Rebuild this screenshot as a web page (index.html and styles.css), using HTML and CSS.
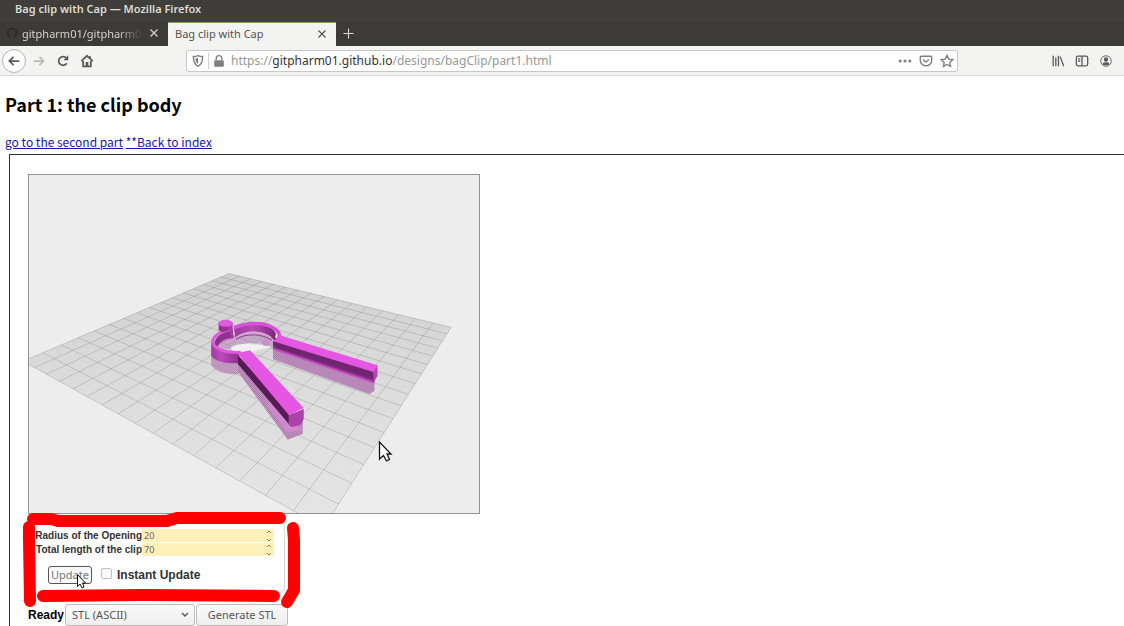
FILE: index.html
```html
<!DOCTYPE html>
<html lang="en">
<head>
<meta charset="utf-8">
<title>Bag clip with Cap</title>
<link rel="stylesheet" href="styles.css">
</head>
<body>
<div class="window">
  <header class="chrome">
    <div class="titlebar">Bag clip with Cap — Mozilla Firefox</div>
    <div class="tabs">
      <div class="tab">
        <svg class="favicon" viewBox="0 0 16 16"><path fill="#2b2c28" d="M8 1a7 7 0 0 0-2.200 13.600c.4.100.5-.1.5-.3v-1.300c-2 .4-2.400-.9-2.400-.9-.3-.8-.8-1-.8-1-.6-.5.100-.5.100-.5.700.100 1.100.8 1.100.8.6 1.100 1.700.8 2.100.6.100-.5.300-.8.500-1-1.600-.2-3.200-.8-3.200-3.500 0-.8.300-1.400.7-1.900 0-.2-.3-.9.100-1.900 0 0 .6-.2 2 .7a7 7 0 0 1 3.500 0c1.300-.9 1.900-.7 1.900-.7.4 1 .2 1.700.1 1.900.5.500.7 1.100.7 1.900 0 2.700-1.600 3.300-3.200 3.500.3.200.5.700.5 1.300v2c0 .2.100.4.500.3A7 7 0 0 0 8 1z"/></svg>
        <span class="tab-name tab-name-faded">gitpharm01/gitpharm0</span>
        <button class="tab-close" aria-label="Close tab"><svg viewBox="0 0 8 8"><path d="M.5.5l7 7M7.500.5l-7 7"/></svg></button>
      </div>
      <div class="tab tab-active">
        <span class="tab-name">Bag clip with Cap</span>
        <button class="tab-close" aria-label="Close tab"><svg viewBox="0 0 8 8"><path d="M.5.5l7 7M7.500.5l-7 7"/></svg></button>
      </div>
      <button class="tab-new" aria-label="New tab"><svg viewBox="0 0 12 12"><path d="M6 .5v11M.5 6h11"/></svg></button>
    </div>
    <nav class="toolbar">
      <div class="nav-buttons">
        <button class="tool back" aria-label="Back"><svg viewBox="0 0 16 16"><path d="M14 8H3M7.500 3.200L2.700 8l4.800 4.800"/></svg></button>
        <button class="tool forward" aria-label="Forward"><svg viewBox="0 0 16 16"><path d="M2 8h11M8.500 3.200L13.300 8l-4.800 4.800"/></svg></button>
        <button class="tool" aria-label="Reload"><svg viewBox="0 0 16 16"><path d="M12.400 10.500a5 5 0 1 1-.6-6"/><path class="solid" d="M14 1.500v5.500H8.500z"/></svg></button>
        <button class="tool" aria-label="Home"><svg viewBox="0 0 16 16"><path d="M1.500 8.200L8 2l6.500 6.200M3.600 8v6h8.800V8"/><path class="solid" d="M6.500 9h3v5h-3zM10.500 2.500h2v3h-2z"/></svg></button>
      </div>
      <div class="urlbar">
        <svg class="glyph" viewBox="0 0 16 16"><path d="M8 1.800c2 .9 3.800 1.100 5.300 1.100 0 6-1.300 9.300-5.300 11.300-4-2-5.300-5.300-5.300-11.300C4.200 2.900 6 2.700 8 1.800z"/><path class="solid" d="M8 4.300v7.200C6 10.300 5.100 8.500 5 5c1.100 0 2-.2 3-.7z"/></svg>
        <span class="divider"></span>
        <svg class="glyph" viewBox="0 0 16 16"><path d="M4.800 7V5a3.200 3.200 0 0 1 6.400 0v2"/><rect class="solid" x="2.500" y="7" width="11" height="7.500" rx="1.500"/></svg>
        <span class="url">https://<b>gitpharm01.github.io</b>/designs/bagClip/part1.html</span>
        <svg class="glyph" viewBox="0 0 16 16"><g class="solid"><circle cx="2.500" cy="8" r="1.800"/><circle cx="8" cy="8" r="1.800"/><circle cx="13.500" cy="8" r="1.800"/></g></svg>
        <svg class="glyph" viewBox="0 0 16 16"><path d="M2.500 2.500h11a1 1 0 0 1 1 1V7a6.500 6.500 0 0 1-13 0V3.500a1 1 0 0 1 1-1zM4.800 6.300L8 9.300l3.200-3"/></svg>
        <svg class="glyph" viewBox="0 0 16 16"><path d="M8 1.600l2 4.200 4.600.6-3.400 3.200.9 4.600L8 12l-4.100 2.200.9-4.600L1.400 6.400 6 5.800z"/></svg>
      </div>
      <div class="side-buttons">
        <button class="tool" aria-label="Library"><svg viewBox="0 0 16 16"><path d="M2.500 2v12M5.500 4v10M8.500 2v12M10.500 3l4 11"/></svg></button>
        <button class="tool" aria-label="Sidebar"><svg viewBox="0 0 16 16"><rect x="1.500" y="2.500" width="13" height="11" rx="2"/><path d="M8 2.500v11M3.500 5.500h2.500M3.500 8h2.500"/></svg></button>
        <button class="tool" aria-label="Account"><svg viewBox="0 0 16 16"><circle cx="8" cy="8" r="6" stroke-width="1"/><circle class="solid" cx="8" cy="6.300" r="2.500"/><path class="solid" d="M4 11c1.500-2 6.500-2 8 0C11 13.500 5 13.500 4 11z"/></svg></button>
      </div>
    </nav>
  </header>

  <main class="page">
    <h1>Part 1: the clip body</h1>
    <p class="links"><a href="#part2">go to the second part</a> <a href="#index">**Back to index</a></p>
    <section class="frame">
      <svg class="viewer" viewBox="28 174 452 339" role="img" aria-label="3D preview of the clip body">
        <defs>
          <linearGradient id="plate" x1="0" y1="0" x2="0" y2="1"><stop offset="0" stop-color="#dadada"/><stop offset=".5" stop-color="#e1e1e1"/><stop offset="1" stop-color="#e8e8e8"/></linearGradient>
          <linearGradient id="wall" x1="0" x2="1"><stop offset="0" stop-color="#a23aa0"/><stop offset=".35" stop-color="#bd48bb"/><stop offset="1" stop-color="#8b318a"/></linearGradient>
          <linearGradient id="inner" x1="0" x2="1"><stop offset="0" stop-color="#9a3999"/><stop offset=".45" stop-color="#b84ab7"/><stop offset="1" stop-color="#772876"/></linearGradient>
          <linearGradient id="side" x1="0" x2="1"><stop offset="0" stop-color="#722770"/><stop offset="1" stop-color="#7f2d7d"/></linearGradient>
          <pattern id="mesh" width="2" height="2" patternUnits="userSpaceOnUse"><rect width="2" height="2" fill="#c99ac8"/><path fill="#a775a6" d="M0 0h1v1H0zM1 1h1v1H1z"/></pattern>
        </defs>
        <path fill="url(#plate)" d="M229 273L452 327 324 528 22 361z"/>
        <path id="minor" class="grid-minor"/>
        <path id="major" class="grid-major"/>

        <g fill="url(#mesh)">
          <path opacity=".8" d="M211 352v12c2 6 12 10 25 10l4-1v-14z"/>
          <path opacity=".6" d="M217 346c4-7 12-9 18-9 9-7 30-7 38 2v8c-14-6-28-5-36-1l-8 3-9-1z"/>
          <path d="M273 345v14l97 35 5-3v-14z"/>
          <path d="M238 358v14l50 68 15-6v-14l-18-4z"/>
        </g>
        <path fill="#d68bd5" opacity=".7" d="M270 400l32 30-14 3-20-26z"/>
        <path fill="#f1eff1" d="M231 347c7-4 14-4 23-3 6 0 12 2 18 3l-11 2-10 3-12-1c-4 0-8 0-8-4z"/>
        <ellipse cx="266" cy="342" rx="4" ry="3.500" fill="#c98fc9"/>

        <path fill="url(#inner)" d="M234 328c12-7 38-7 42 6l-2 6c-5-9-26-13-39-3z"/>
        <path fill="none" stroke="#e2a0e1" d="M236 337c9-6 26-6 35 0"/>
        <path fill="none" stroke="#93378f" d="M236 339c9-6 26-6 36 1"/>
        <path fill="#8c348b" d="M214 343c2-8 10-12 19-13v8c-8 0-13 3-16 9z"/>
        <path fill="none" stroke="#cf60cd" d="M218 346c3-5 8-7 15-8"/>
        <path fill="url(#wall)" d="M211 342v13c2 5 13 9 28 8V352c-14 0-25-4-28-10z"/>
        <path fill="none" stroke="#df58dd" stroke-width="3" d="M233 329c-12 1-21 7-20.500 13 1 7 14 11 28 10"/>
        <path fill="none" stroke="#d851d6" stroke-width="3.500" d="M234 327.500c12-6 31-6 40 .5 6 4 7 7 4 11"/>
        <path fill="#93338f" d="M218.500 323v7l4 2 6-2v-6z"/>
        <path fill="#a93da8" d="M227 325l5.500-2v10l2 4-3 1-3-9z"/>
        <ellipse cx="225.500" cy="323" rx="7.500" ry="3.500" fill="#df59dd"/>

        <path fill="#a43da3" d="M273 345l102 34v4l-102-34z"/>
        <path fill="url(#side)" d="M274 337l101 32v12l-101-34z"/>
        <path fill="#cc50ca" d="M273 348l101 34v1.500l-101-34z"/>
        <path fill="#e557e3" d="M273 341l7-6 98 30-4 10z"/>
        <path fill="#702570" d="M273 341l101 31v7l-101-34z"/>
        <path fill="#b444b2" d="M374 372l4-7v11l-4 7z"/>
        <path fill="#571b56" d="M238 355l51 56v13l-51-60z"/>
        <path fill="#e557e3" d="M237 353l13-3 54 58-15 7z"/>
        <path fill="#ad42ab" d="M289 415l15-6v10l-3 6-9 2-3-2z"/>
      </svg>

      <form class="params">
        <div class="field">
          <label for="radius">Radius of the Opening</label>
          <span class="number"><input id="radius" type="number" value="20"><svg viewBox="0 0 6 12"><path d="M1 3l2-2 2 2M1 9l2 2 2-2"/></svg></span>
        </div>
        <div class="field">
          <label for="length">Total length of the clip</label>
          <span class="number"><input id="length" type="number" value="70"><svg viewBox="0 0 6 12"><path d="M1 3l2-2 2 2M1 9l2 2 2-2"/></svg></span>
        </div>
        <div class="actions">
          <button class="update" type="button">Update</button>
          <input class="check" id="instant" type="checkbox">
          <label for="instant">Instant Update</label>
        </div>
      </form>

      <div class="export">
        <label for="format">Ready</label>
        <span class="picker"><select id="format"><option>STL (ASCII)</option></select><svg viewBox="0 0 8 6"><path d="M1 1l3 3 3-3"/></svg></span>
        <button class="generate" type="button">Generate STL</button>
      </div>
    </section>
  </main>

  <svg class="markup" width="1124" height="626" viewBox="0 0 1124 626" aria-hidden="true">
    <g fill="none" stroke="#fe0000" stroke-width="12" stroke-linecap="round" stroke-linejoin="round">
      <path d="M33 519h18l7 2h109l10-3h103"/>
      <path d="M29 527v11l1 63"/>
      <path d="M43 596l100-1 131 1"/>
      <path d="M293 528l1 12v50l-7 12"/>
    </g>
    <g fill="#fff" stroke="#111" stroke-width="1">
      <path stroke-width="1.300" d="M379.500 442v17l4-3.500 3 5.500 3-1.500-2.500-5.500h4z"/>
      <path d="M77.500 574.500v12l2.500-2.500 2 4 2-1-1.500-4h3z"/>
    </g>
  </svg>
</div>
<script src="grid.js"></script>
</body>
</html>
```
FILE: grid.js
```js
// Projects the build plate's unit square onto its four screen corners.
const A = [229, 273], B = [452, 327], D = [324, 528], C = [22, 361];
const sx = A[0] - B[0] + D[0] - C[0], sy = A[1] - B[1] + D[1] - C[1];
const dx1 = B[0] - D[0], dx2 = C[0] - D[0], dy1 = B[1] - D[1], dy2 = C[1] - D[1];
const det = dx1 * dy2 - dx2 * dy1;
const g = (sx * dy2 - dx2 * sy) / det, h = (dx1 * sy - sx * dy1) / det;

function project(u, v) {
  const w = g * u + h * v + 1;
  const x = (B[0] - A[0] + g * B[0]) * u + (C[0] - A[0] + h * C[0]) * v + A[0];
  const y = (B[1] - A[1] + g * B[1]) * u + (C[1] - A[1] + h * C[1]) * v + A[1];
  return (x / w).toFixed(2) + " " + (y / w).toFixed(2);
}

function lines(count) {
  let d = "";
  for (let i = 0; i <= count; i++) {
    const t = i / count;
    d += `M${project(t, 0)}L${project(t, 1)}M${project(0, t)}L${project(1, t)}`;
  }
  return d;
}

document.getElementById("major").setAttribute("d", lines(16));
document.getElementById("minor").setAttribute("d", lines(160));
```
FILE: styles.css
```css
* { box-sizing: border-box; }
body { margin: 0; background: #fff; }
button { margin: 0; padding: 0; border: 0; background: none; }
svg { display: block; flex: none; }

.window { position: relative; height: 100vh; overflow: hidden; }
.chrome { font-family: "Noto Sans", sans-serif; font-size: 12px; }
.titlebar {
  height: 22px; padding-left: 15px; line-height: 17px;
  background: #3f3e3a; color: #dedbd3; font-size: 11px; font-weight: 600;
}
.tabs { display: flex; height: 24px; background: #3c3b37; }
.tab { display: flex; align-items: center; width: 168px; padding: 0 10px 2px 6px; color: #d5d2ca; }
.tab-active { padding-left: 7px; background: #f3f3f2; border-top: 1px solid #7da24a; color: #55544f; }
.favicon { width: 12px; height: 12px; margin-right: 4px; }
.tab-name { flex: 1; white-space: nowrap; font-size: 11px; }
.tab-name-faded { -webkit-mask-image: linear-gradient(90deg, #000 80%, transparent); mask-image: linear-gradient(90deg, #000 80%, transparent); }
.tab-close { width: 8px; height: 8px; margin-left: 8px; color: inherit; }
.tab-close svg, .tab-new svg { width: 100%; stroke: currentColor; stroke-width: 1.2; fill: none; }
.tab-new { align-self: center; width: 11px; height: 11px; margin: 0 0 2px 7px; color: #dedbd3; }

.toolbar {
  display: flex; align-items: center; height: 30px; padding: 0 11px 0 2px;
  background: #f3f3f2; border-bottom: 1px solid #d8d8d7;
}
.nav-buttons { display: flex; align-items: center; gap: 10px; width: 184px; }
.tool svg { width: 14px; height: 14px; stroke: #5a5a5a; stroke-width: 2; fill: none; }
.tool .solid { fill: #5a5a5a; stroke: none; }
.tool.back { display: grid; place-items: center; width: 24px; height: 24px; margin-right: -4px; border: 1px solid #b5b5b5; border-radius: 50%; background: #fdfdfd; }
.tool.forward svg { stroke: #b9b9b9; }
.side-buttons { display: flex; gap: 10px; margin-left: auto; }
.side-buttons .tool svg { stroke-width: 1.5; }
.urlbar {
  display: flex; align-items: center; gap: 7px; flex: 0 1 772px; height: 22px; padding: 0 3px 0 4px;
  background: #fff; border: 1px solid #c8c8c7; border-radius: 3px;
}
.glyph { width: 14px; height: 14px; stroke: #808080; stroke-width: 1.6; fill: none; }
.glyph .solid { fill: #808080; stroke: none; }
.divider { width: 1px; height: 16px; margin: 0 -4px; background: #d0d0d0; }
.url { flex: 1; margin-left: -2px; white-space: nowrap; color: #979797; }
.url b { font-weight: 400; color: #333; }

.page { padding-left: 5px; font-family: "Noto Sans CJK JP", sans-serif; font-size: 12px; }
h1 { margin: 13px 0; font-size: 18px; line-height: 30px; }
.links { margin: 0; line-height: 20px; }
.links a { color: #1a13b4; }
.frame {
  margin: 2px 0 0 4px; padding: 19px 0 0 18px;
  border: solid #333; border-width: 1px 0 0 1px;
  font-family: "Liberation Sans", sans-serif; font-size: 12px; color: #222;
}
.viewer { width: 100%; max-width: 452px; background: #ededed; border: 1px solid #939393; }
.grid-major { fill: none; stroke: #777; stroke-opacity: .42; stroke-width: .7; }
.grid-minor { fill: none; stroke: #999; stroke-opacity: .16; stroke-width: .3; }

.params {
  max-width: 257px; margin-top: 6px; padding: 8px 10px 10px;
  border: 1px solid #d4d4d4; border-radius: 8px; color: #333;
}
.field { display: flex; height: 14px; align-items: center; justify-content: flex-end; white-space: nowrap; }
.field label { font-size: 10px; font-weight: 700; }
.number { display: flex; align-items: center; width: 132px; height: 13px; padding: 0 2px; background: #fff0b8; }
.number input {
  flex: 1; min-width: 0; padding: 0; border: 0; background: none; appearance: textfield; -moz-appearance: textfield;
  font: 9px/12px "Noto Sans", sans-serif; color: #666;
}
.number input::-webkit-inner-spin-button { display: none; }
.number svg { width: 6px; height: 12px; fill: none; stroke: #8b8368; }
.actions { display: flex; align-items: center; margin-top: 9px; padding-left: 9px; }
.actions label { font-weight: 700; }
.update { width: 44px; height: 18px; border: 1px solid #555; border-radius: 3px; background: #fafafa; color: #777; font: 11px/14px "Noto Sans", sans-serif; }
.check { appearance: none; width: 11px; height: 11px; margin: 0 5px 3px 9px; border: 1px solid #c2c2c2; border-radius: 2px; background: #fafafa; }

.export { display: flex; align-items: center; gap: 1px; margin-top: 9px; }
.export label { font-weight: 700; color: #000; }
.picker { display: grid; align-items: center; width: 130px; }
.picker > * { grid-area: 1 / 1; }
.picker select, .generate {
  height: 22px; border: 1px solid #bdbdbd; border-radius: 3px;
  background: linear-gradient(#fafafa, #eee); color: #555; font: 11px/18px "Noto Sans", sans-serif;
}
.picker select { appearance: none; width: 100%; padding: 0 6px; }
.picker svg { justify-self: end; width: 8px; height: 6px; margin-right: 6px; fill: none; stroke: #555; stroke-width: 1.4; pointer-events: none; }
.generate { width: 92px; }

.markup { position: absolute; left: 0; top: 0; pointer-events: none; }
```
